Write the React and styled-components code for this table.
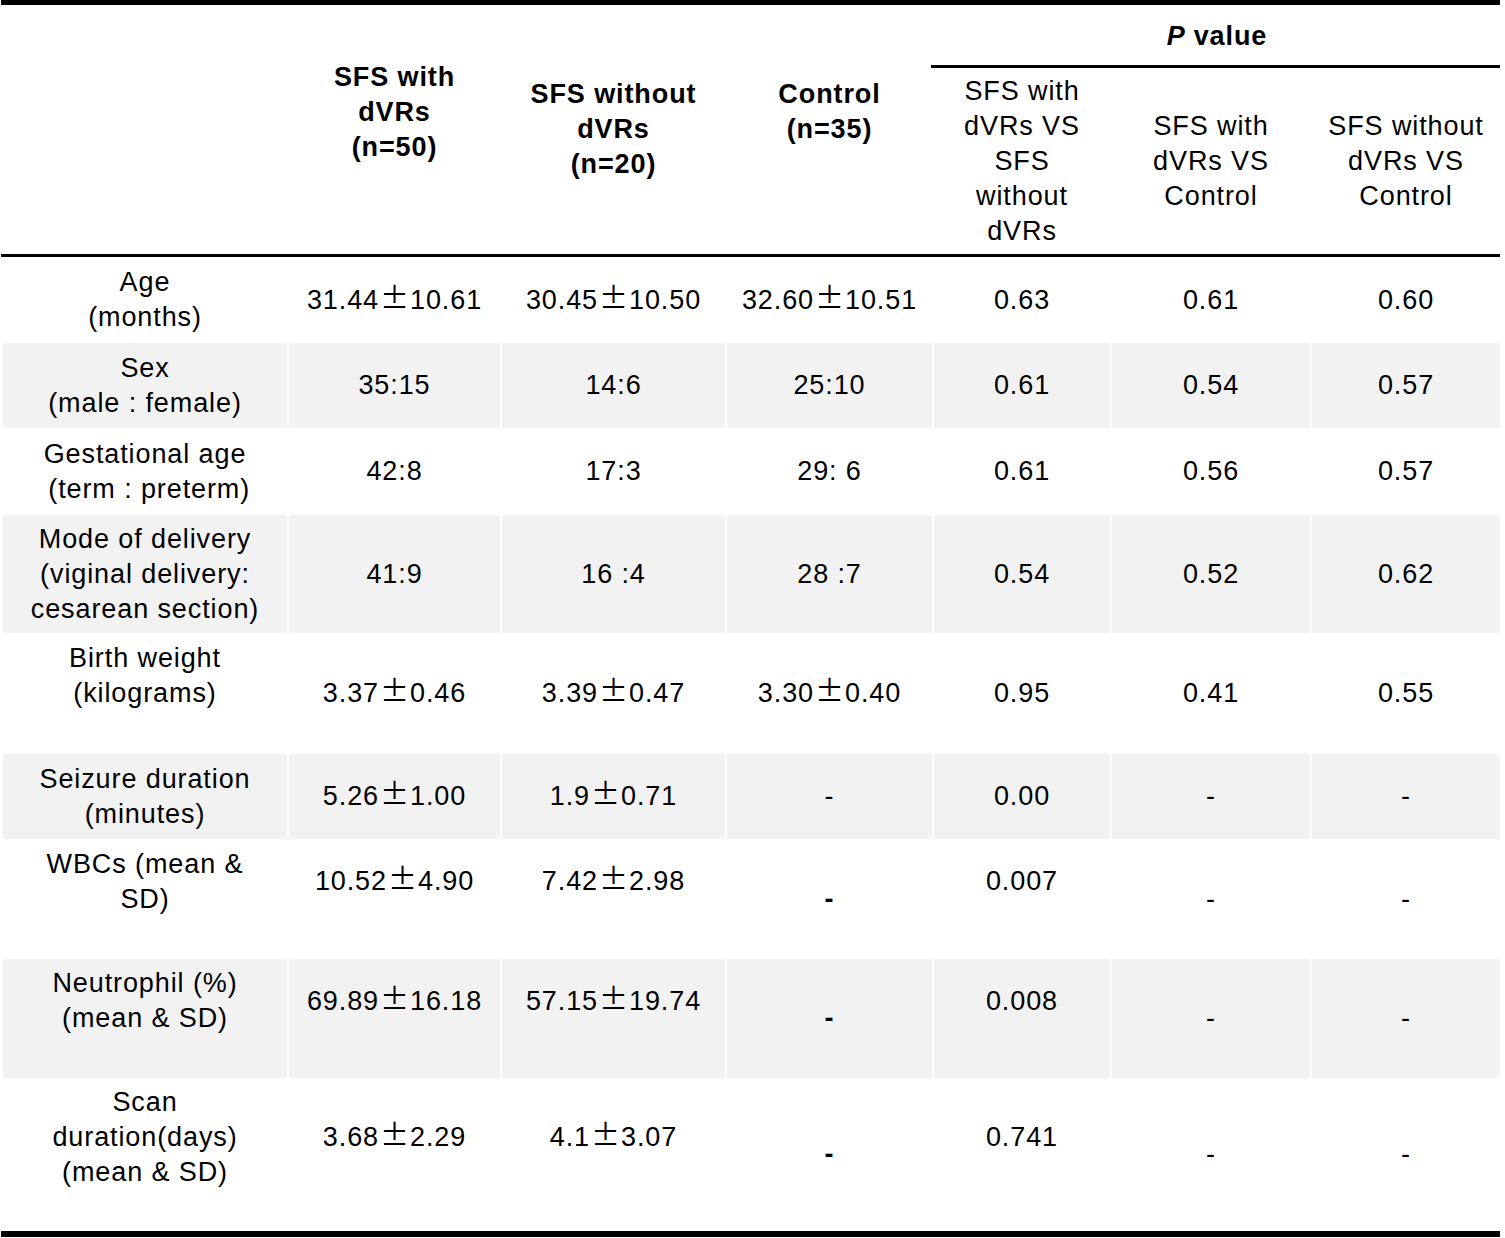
import React from 'react';
import styled, { createGlobalStyle } from 'styled-components';

const LINE = 35;

const GlobalStyle = createGlobalStyle`
  html, body {
    margin: 0;
    padding: 0;
    background: #ffffff;
  }
  body {
    font-family: "Liberation Sans", Arial, sans-serif;
    color: #000000;
  }
`;

const TableWrap = styled.div`
  width: 1499px;
  margin-left: 1px;
  border-top: 5px solid #000;
  border-bottom: 6px solid #000;
  font-size: 27px;
  letter-spacing: 0.9px;
  line-height: ${LINE}px;
`;

const HeaderRow = styled.div`
  display: grid;
  grid-template-columns: 284px 211px 223px 205px 1fr;
  column-gap: 2px;
  padding-left: 2px;
  height: 249px;
  border-bottom: 3px solid #000;
`;

const HeadCell = styled.div`
  display: flex;
  align-items: center;
  justify-content: center;
  text-align: center;
  font-weight: 700;
  padding-bottom: ${p => (p.$trail ? LINE : 0)}px;
`;

const PGroup = styled.div`
  display: flex;
  flex-direction: column;
`;

const PTitle = styled.div`
  height: 58px;
  display: flex;
  align-items: center;
  justify-content: center;
  font-weight: 700;
  padding-top: 2px;

  em {
    font-style: italic;
    margin-right: 8px;
  }
`;

const PRule = styled.div`
  height: 3px;
  background: #000;
  margin-left: -3px;
`;

const SubGrid = styled.div`
  flex: 1;
  display: grid;
  grid-template-columns: 176px 198px 188px;
  column-gap: 2px;
`;

const SubCell = styled.div`
  display: flex;
  align-items: center;
  justify-content: center;
  text-align: center;
`;

const Row = styled.div`
  display: grid;
  grid-template-columns: 284px 211px 223px 205px 176px 198px 188px;
  column-gap: 2px;
  padding-left: 2px;
  height: ${p => p.$h}px;
`;

const Cell = styled.div`
  display: flex;
  align-items: center;
  justify-content: center;
  text-align: center;
  white-space: nowrap;
  background: ${p => (p.$shade ? '#f2f2f2' : 'transparent')};
  padding-bottom: ${p => (p.$trail ? LINE : 0)}px;
  font-weight: ${p => (p.$bold ? 700 : 400)};
`;

// full-width plus-minus, as set in the source document
const Pm = styled.span`
  font-family: "Noto Sans CJK SC", "Noto Sans CJK JP", sans-serif;
  font-feature-settings: "fwid";
  font-size: 29px;
  font-weight: 400;
  line-height: 0;
  letter-spacing: 0;
  margin: 0 1px;
`;

const Lines = ({ lines }) =>
  lines.map((l, i) => (
    <React.Fragment key={i}>
      {i > 0 && <br />}
      {l}
    </React.Fragment>
  ));

const Value = ({ text }) => {
  const parts = text.split('±');
  if (parts.length < 2) return text;
  return (
    <span>
      {parts[0]}
      <Pm>±</Pm>
      {parts[1]}
    </span>
  );
};

// each value: string, or { t, trail, bold }
const rows = [
  { h: 86, label: ['Age', '(months)'], vals: ['31.44±10.61', '30.45±10.50', '32.60±10.51', '0.63', '0.61', '0.60'] },
  { h: 85, shade: true, label: ['Sex', '(male : female)'], vals: ['35:15', '14:6', '25:10', '0.61', '0.54', '0.57'] },
  { h: 87, label: ['Gestational age', '\u00a0(term : preterm)'], vals: ['42:8', '17:3', '29: 6', '0.61', '0.56', '0.57'] },
  { h: 118, shade: true, label: ['Mode of delivery', '(viginal delivery:', 'cesarean section)'], vals: ['41:9', '16 :4', '28 :7', '0.54', '0.52', '0.62'] },
  { h: 121, trail: true, label: ['Birth weight', '(kilograms)'], vals: ['3.37±0.46', '3.39±0.47', '3.30±0.40', '0.95', '0.41', '0.55'] },
  { h: 85, shade: true, label: ['Seizure duration', '(minutes)'], vals: ['5.26±1.00', '1.9±0.71', '-', '0.00', '-', '-'] },
  {
    h: 120, trail: true, label: ['WBCs (mean &', 'SD)'],
    vals: [{ t: '10.52±4.90', trail: true }, { t: '7.42±2.98', trail: true }, { t: '-', bold: true }, { t: '0.007', trail: true }, '-', '-'],
  },
  {
    h: 119, shade: true, trail: true, label: ['Neutrophil (%)', '(mean & SD)'],
    vals: [{ t: '69.89±16.18', trail: true }, { t: '57.15±19.74', trail: true }, { t: '-', bold: true }, { t: '0.008', trail: true }, '-', '-'],
  },
  {
    h: 153, trail: true, label: ['Scan', 'duration(days)', '(mean & SD)'],
    vals: [{ t: '3.68±2.29', trail: true }, { t: '4.1±3.07', trail: true }, { t: '-', bold: true }, { t: '0.741', trail: true }, '-', '-'],
  },
];

export default function App() {
  return (
    <>
      <GlobalStyle />
      <TableWrap>
        <HeaderRow>
          <HeadCell />
          <HeadCell $trail>
            <Lines lines={['SFS with', 'dVRs', '(n=50)']} />
          </HeadCell>
          <HeadCell>
            <Lines lines={['SFS without', 'dVRs', '(n=20)']} />
          </HeadCell>
          <HeadCell $trail>
            <Lines lines={['Control', '(n=35)']} />
          </HeadCell>
          <PGroup>
            <PTitle>
              <em>P</em>value
            </PTitle>
            <PRule />
            <SubGrid>
              <SubCell>
                <Lines lines={['SFS with', 'dVRs VS', 'SFS', 'without', 'dVRs']} />
              </SubCell>
              <SubCell>
                <Lines lines={['SFS with', 'dVRs VS', 'Control']} />
              </SubCell>
              <SubCell>
                <Lines lines={['SFS without', 'dVRs VS', 'Control']} />
              </SubCell>
            </SubGrid>
          </PGroup>
        </HeaderRow>

        {rows.map((r, i) => (
          <Row key={i} $h={r.h}>
            <Cell $shade={r.shade} $trail={r.trail}>
              <div>
                <Lines lines={r.label} />
              </div>
            </Cell>
            {r.vals.map((v, j) => {
              const item = typeof v === 'string' ? { t: v } : v;
              return (
                <Cell key={j} $shade={r.shade} $trail={item.trail} $bold={item.bold}>
                  <Value text={item.t} />
                </Cell>
              );
            })}
          </Row>
        ))}
      </TableWrap>
    </>
  );
}
